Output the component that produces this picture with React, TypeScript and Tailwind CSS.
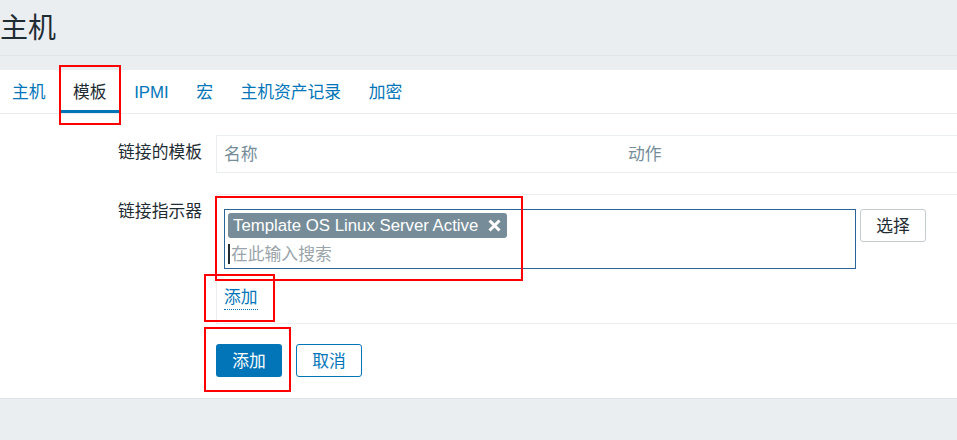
import React from "react";

const FONT = '"Liberation Sans", Arial, "Noto Sans CJK SC", sans-serif';

const tabs = ["主机", "模板", "IPMI", "宏", "主机资产记录", "加密"];

function Tabs() {
  return (
    <div className="flex h-[44px] gap-[3.5px] border-b border-[#ebeef1]">
      {tabs.map((t) => {
        const active = t === "模板";
        return (
          <div
            key={t}
            className={
              active
                ? "flex h-[43px] items-center border-b-[3px] border-[#0275b8] px-[12px] pt-[6px] text-[#1f2c33]"
                : "flex h-[43px] items-center px-[12px] pt-[3px] text-[#0275b8]"
            }
          >
            {t}
          </div>
        );
      })}
    </div>
  );
}

function Tag() {
  return (
    <div className="flex h-[25px] w-fit items-center gap-[10px] rounded-[3px] bg-[#768d99] pl-[5px] pr-[6px] text-white">
      <span>Template OS Linux Server Active</span>
      <svg width="13" height="13" viewBox="0 0 13 13">
        <path d="M1.5 1.5 L11.5 11.5 M11.5 1.5 L1.5 11.5" stroke="white" strokeWidth="3" />
      </svg>
    </div>
  );
}

export default function App() {
  return (
    <div
      className="relative h-[440px] w-full overflow-hidden bg-[#ebeef1] text-[16.8px] leading-[20px] text-[#1f2c33]"
      style={{ fontFamily: FONT }}
    >
      {/* Page title */}
      <div className="flex h-[56px] items-center border-b border-[#dfe4e7] pt-[3px]">
        <h1 className="text-[28px] leading-[32px] text-[#1f2c33]">主机</h1>
      </div>

      {/* Tabbed form */}
      <div className="mt-[14px] h-[329px] border-b border-[#dfe4e7] bg-white">
        <Tabs />

        <div className="grid grid-cols-[202px_800px] gap-x-[14px] pt-[21px]">
          <div className="pt-[8px] text-right">链接的模板</div>
          <div className="flex h-[38px] items-center border border-[#ebeef1] pt-[2px] text-[#768d99]">
            <div className="w-[404px] pl-[7px]">名称</div>
            <div className="pl-[7px]">动作</div>
          </div>

          <div className="mt-[21px] pt-[8px] text-right">链接指示器</div>
          <div className="mt-[21px] h-[130px] border border-[#ebeef1] pl-[7px] pt-[14px]">
            <div className="flex gap-[4px]">
              <div className="flex h-[60px] w-[632px] flex-col border border-[#2a6597] pl-[3px] pt-[3px]">
                <Tag />
                <div className="mt-[5px] flex h-[22px] items-center text-[#9aa4aa]">
                  <span className="mr-[1px] h-[20px] w-[2px] bg-[#1f2c33]" />
                  <span className="pt-[2px]">在此输入搜索</span>
                </div>
              </div>
              <button className="h-[33px] w-[66px] rounded-[3px] border border-[#c2ccd1] bg-white pt-[2px] text-[#1f2c33]">
                选择
              </button>
            </div>
            <div className="mt-[19px]">
              <span className="border-b border-dotted border-[#0275b8] pb-[2px] text-[#0275b8]">添加</span>
            </div>
          </div>

          <div />
          <div className="mt-[20px] flex gap-[14px]">
            <button className="h-[33px] w-[66px] rounded-[3px] bg-[#0275b8] pt-[2px] text-white">添加</button>
            <button className="h-[33px] w-[66px] rounded-[3px] border border-[#0275b8] bg-white pt-[2px] text-[#0275b8]">
              取消
            </button>
          </div>
        </div>
      </div>

      {/* Red annotation boxes */}
      <div className="absolute left-[59px] top-[65px] h-[60px] w-[62px] border-2 border-[#ff0000]" />
      <div className="absolute left-[215px] top-[196px] h-[85px] w-[308px] border-2 border-[#ff0000]" />
      <div className="absolute left-[204px] top-[274px] h-[48px] w-[71px] border-2 border-[#ff0000]" />
      <div className="absolute left-[204px] top-[327px] h-[65px] w-[87px] border-2 border-[#ff0000]" />
    </div>
  );
}
